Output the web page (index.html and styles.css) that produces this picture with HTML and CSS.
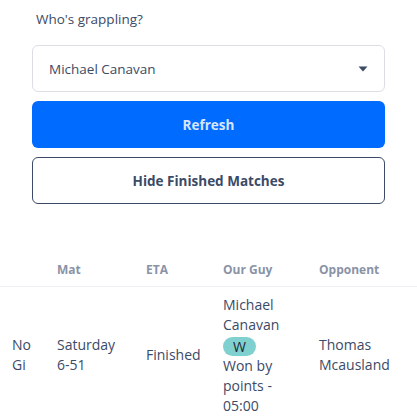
FILE: index.html
```html
<!DOCTYPE html>
<html>
<head>
<meta charset="utf-8">
<link rel="stylesheet" href="styles.css">
</head>
<body>
<div class="form">
  <label class="label">Who's grappling?</label>
  <div class="select">
    <span>Michael Canavan</span>
    <svg class="caret" width="10" height="6" viewBox="0 0 10 6"><path d="M0.5 0.5 L9.5 0.5 L5 5.5 Z" fill="#3b4a66"/></svg>
  </div>
  <button class="btn btn-primary">Refresh</button>
  <button class="btn btn-outline">Hide Finished Matches</button>
</div>
<div class="table-wrap">
  <table class="matches">
    <colgroup>
      <col class="c1"><col class="c2"><col class="c3"><col class="c4"><col class="c5">
    </colgroup>
    <thead>
      <tr><th></th><th>Mat</th><th>ETA</th><th>Our Guy</th><th>Opponent</th></tr>
    </thead>
    <tbody>
      <tr>
        <td>No Gi</td>
        <td>Saturday 6-51</td>
        <td>Finished</td>
        <td>Michael Canavan<br><span class="badge">W</span><br>Won by points - 05:00</td>
        <td>Thomas Mcausland</td>
      </tr>
    </tbody>
  </table>
</div>
</body>
</html>
```
FILE: styles.css
```css
* { box-sizing: border-box; }
html, body { margin: 0; padding: 0; background: #fff; }
body {
  font-family: "Open Sans", "Noto Sans", sans-serif;
  color: #3b4a66;
  font-size: 14px;
  overflow: hidden;
}
.form {
  padding: 9px 32px 0 32px;
  display: flex;
  flex-direction: column;
  gap: 9px;
}
.label {
  display: block;
  padding-left: 4px;
  font-size: 13.5px;
  line-height: 20px;
  margin-bottom: 7px;
}
.select {
  height: 47px;
  border: 1px solid #dcdee4;
  border-radius: 6px;
  display: flex;
  align-items: center;
  justify-content: space-between;
  padding: 0 16px;
  font-size: 13.5px;
}
.btn {
  height: 47px;
  border-radius: 6px;
  font-family: inherit;
  font-weight: 700;
  font-size: 13.5px;
  width: 100%;
}
.btn-primary {
  background: #006bff;
  border: none;
  color: #d6e6ff;
}
.btn-outline {
  background: #fff;
  border: 1px solid #3b4a66;
  color: #3b4a66;
}
.table-wrap {
  margin-top: 58px;
}
.matches {
  border-collapse: collapse;
  table-layout: fixed;
  width: 417px;
}
.c1 { width: 45px; }
.c2 { width: 89px; }
.c3 { width: 77px; }
.c4 { width: 96px; }
.c5 { width: 110px; }
th {
  text-align: left;
  font-size: 12px;
  font-weight: 700;
  color: #8a93a6;
  padding: 0 12px 8px 12px;
  line-height: 16px;
  border-bottom: 1px solid #eef0f5;
}
td {
  padding: 8px 12px;
  vertical-align: middle;
  line-height: 20px;
  font-size: 14px;
}
.badge {
  display: inline-block;
  background: #80d0d0;
  color: #1e2a33;
  border-radius: 10px;
  width: 33px;
  height: 19px;
  line-height: 19px;
  text-align: center;
  font-size: 14px;
  vertical-align: middle;
}
```
